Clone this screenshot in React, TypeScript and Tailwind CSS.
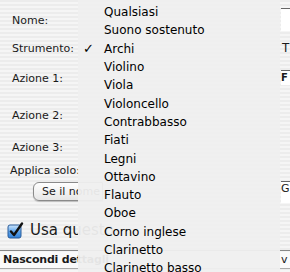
const items = [
  'Qualsiasi',
  'Suono sostenuto',
  'Archi',
  'Violino',
  'Viola',
  'Violoncello',
  'Contrabbasso',
  'Fiati',
  'Legni',
  'Ottavino',
  'Flauto',
  'Oboe',
  'Corno inglese',
  'Clarinetto',
  'Clarinetto basso',
];

function AquaCheckbox() {
  return (
    <svg width="17" height="17" viewBox="0 0 17 17">
      <defs>
        <linearGradient id="cb" x1="0" y1="0" x2="0" y2="1">
          <stop offset="0" stopColor="#cfe6fb" />
          <stop offset="0.5" stopColor="#5fa5ec" />
          <stop offset="1" stopColor="#2f7fd8" />
        </linearGradient>
      </defs>
      <rect x="1" y="3" width="13" height="13" rx="2" fill="url(#cb)" stroke="#2a5c9a" />
      <path d="M4 9.5 L7 13 L15 1.5" fill="none" stroke="#111" strokeWidth="2.4" strokeLinecap="round" strokeLinejoin="round" />
    </svg>
  );
}

export default function App() {
  const stripes = 'bg-[repeating-linear-gradient(180deg,#ececec_0px,#ececec_2px,#f5f5f5_2px,#f5f5f5_4px)]';
  return (
    <div
      className={`relative w-[290px] h-[272px] overflow-hidden text-[11px] text-[#1a1a1a] ${stripes}`}
      style={{ fontFamily: '"DejaVu Sans", "Lucida Grande", sans-serif' }}
    >
      {/* window underneath */}
      <div className="flex flex-col">
        <div className="flex h-[36px] items-center">
          <span className="pl-[12px] pt-[6px]">Nome:</span>
          <div className="ml-auto mt-[2px] h-[23px] w-[9px] bg-white border-t border-[#666]" />
        </div>
        <div className="flex h-[24px] items-center">
          <span className="pl-[12px] pt-[2px]">Strumento:</span>
          <span className="ml-auto w-[9px] overflow-hidden pl-[1px] text-[12px]">T</span>
        </div>
        <div className="flex h-[36px] items-start">
          <span className="pl-[12px] pt-[11px]">Azione 1:</span>
          <div className="ml-auto mt-[10px] w-[9px] overflow-hidden border-t border-[#666] bg-white">
            <span className="block font-bold text-[10px] leading-[14px]">F</span>
          </div>
        </div>
        <div className="flex h-[34px] items-center">
          <span className="pl-[12px] pt-[6px]">Azione 2:</span>
        </div>
        <div className="flex h-[32px] items-center">
          <span className="pl-[12px] pt-[4px]">Azione 3:</span>
        </div>
        <div className="flex h-[19px] items-center">
          <span className="pl-[10px]">Applica solo:</span>
        </div>
        <div className="flex h-[28px] items-start">
          <div className="ml-[33px] mt-[1px] h-[19px] w-[70px] rounded-l-[6px] border border-[#8a8a8a] bg-[linear-gradient(#ffffff,#e6e6e6)] pl-[8px] leading-[17px] shadow-[0_1px_1px_rgba(0,0,0,0.2)]">
            Se il nome
          </div>
          <div className="ml-auto h-[22px] w-[9px] overflow-hidden border-t border-[#666] bg-white">
            <span className="block text-[11px] leading-[14px]">G</span>
          </div>
        </div>
        <div className="flex h-[40px] items-center gap-[6px] pl-[7px] pt-[2px]">
          <AquaCheckbox />
          <span className="text-[15px]">Usa questo</span>
        </div>
        <div className="flex h-[22px] border-t border-[#888] mt-[1px]">
          <div className="flex h-[17px] w-full items-center justify-between border-b border-[#aaa] bg-[#fafafa] mt-[1px]">
            <span className="pl-[3px] text-[11px] font-bold tracking-[-0.2px]">Nascondi dettagli</span>
            <span className="w-[9px] overflow-hidden text-[11px]">v</span>
          </div>
        </div>
      </div>

      {/* popup menu */}
      <div className="absolute left-[78px] top-0 w-[202px] h-[290px] bg-[#efefef]/95 pt-[3px]">
        {items.map((it) => (
          <div key={it} className="relative flex h-[18.3px] items-center pl-[26px] text-[12px] text-black">
            {it === 'Archi' && <span className="absolute left-[5px] text-[13px]">✓</span>}
            {it}
          </div>
        ))}
      </div>
    </div>
  );
}
